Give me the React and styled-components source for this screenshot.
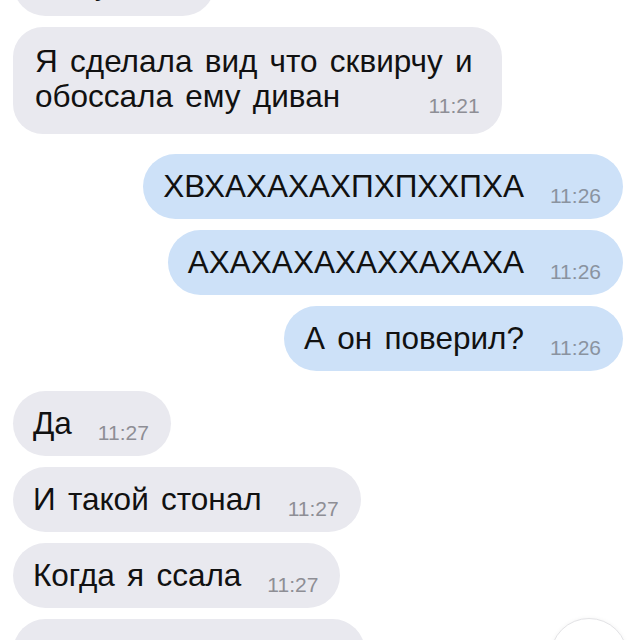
import React from "react";
import styled, { createGlobalStyle } from "styled-components";

const GlobalStyle = createGlobalStyle`
  html, body {
    margin: 0;
    padding: 0;
    background: #ffffff;
  }
  body {
    font-family: "Liberation Sans", Arial, sans-serif;
  }
`;

const Screen = styled.div`
  position: relative;
  width: 640px;
  height: 640px;
  overflow: hidden;
  background: #ffffff;
`;

const Thread = styled.div`
  display: flex;
  flex-direction: column;
  gap: 20px;
  padding: 0 17px 0 13px;
  margin-top: -49px;
`;

const Group = styled.div`
  display: flex;
  flex-direction: column;
  gap: 11px;
  align-items: ${(p) => (p.$out ? "flex-end" : "flex-start")};
`;

const Bubble = styled.div`
  display: flex;
  flex-direction: column;
  background: ${(p) => (p.$out ? "#cde1f8" : "#e9e9ef")};
  border-radius: ${(p) => (p.$multi ? "30px" : "33px")};
  padding: ${(p) => (p.$multi ? "17px 22px 20px 22px" : "15px 22px 15px 20px")};
`;

const Row = styled.div`
  display: flex;
  align-items: flex-end;
  justify-content: space-between;
  gap: 26px;
`;

const Text = styled.span`
  font-size: 31.5px;
  line-height: 35px;
  word-spacing: 3.5px;
  color: #111111;
  white-space: nowrap;
  padding-right: ${(p) => (p.$pad ? "7px" : "0")};
`;

const Time = styled.span`
  flex-shrink: 0;
  font-size: 21px;
  line-height: 16px;
  color: ${(p) => (p.$out ? "#8a93a0" : "#8e8e95")};
`;

const ScrollButton = styled.div`
  position: absolute;
  right: 12px;
  top: 618px;
  width: 76px;
  height: 76px;
  border-radius: 50%;
  background: #ffffff;
  border: 1px solid #e3e3e6;
  box-shadow: 0 0 4px rgba(0, 0, 0, 0.05);
`;

function Message({ out, text, time }) {
  return (
    <Bubble $out={out}>
      <Row>
        <Text>{text}</Text>
        <Time $out={out}>{time}</Time>
      </Row>
    </Bubble>
  );
}

export default function App() {
  return (
    <Screen>
      <GlobalStyle />
      <Thread>
        <Group>
          <Message text="Сижу." time="11:21" />
          <Bubble $multi>
            <Text $pad>Я сделала вид что сквирчу и</Text>
            <Row>
              <Text>обоссала ему диван</Text>
              <Time>11:21</Time>
            </Row>
          </Bubble>
        </Group>
        <Group $out>
          <Message out text="ХВХАХАХАХПХПХХПХА" time="11:26" />
          <Message out text="АХАХАХАХАХХАХАХА" time="11:26" />
          <Message out text="А он поверил?" time="11:26" />
        </Group>
        <Group>
          <Message text="Да" time="11:27" />
          <Message text="И такой стонал" time="11:27" />
          <Message text="Когда я ссала" time="11:27" />
          <Message text="Представляешь" time="11:27" />
        </Group>
      </Thread>
      <ScrollButton />
    </Screen>
  );
}
